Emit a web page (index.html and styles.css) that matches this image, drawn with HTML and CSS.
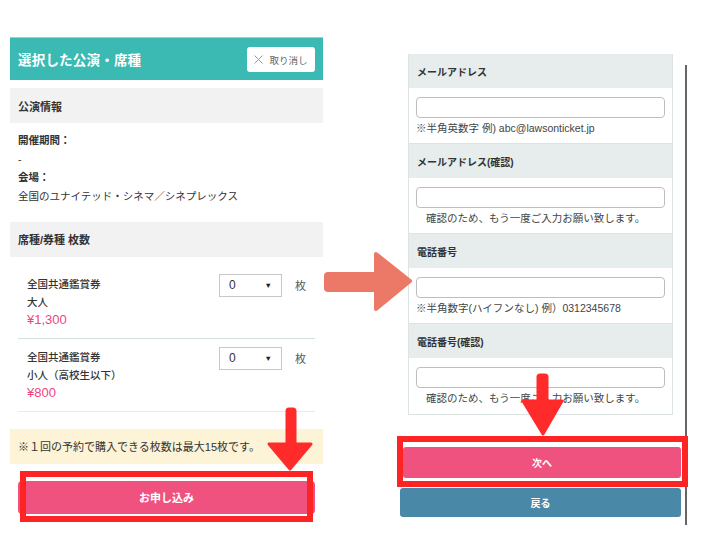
FILE: index.html
```html
<!DOCTYPE html>
<html lang="ja">
<head>
<meta charset="utf-8">
<link rel="stylesheet" href="styles.css">
</head>
<body>
<div class="page">
  <div class="left">
    <div class="sel-head">
      <span class="sel-title">選択した公演・席種</span>
      <span class="cancel"><svg class="x" width="9" height="9" viewBox="0 0 9 9"><path d="M0.5 0.5L8.5 8.5M8.5 0.5L0.5 8.5" stroke="#999" stroke-width="1" fill="none"/></svg>取り消し</span>
    </div>
    <div class="gray-bar">公演情報</div>
    <div class="info">
      <div class="b">開催期間：</div>
      <div>-</div>
      <div class="b">会場：</div>
      <div>全国のユナイテッド・シネマ／シネプレックス</div>
    </div>
    <div class="gray-bar">席種/券種 枚数</div>
    <div class="rows">
      <div class="row first">
        <div class="row-text">
          <div class="m">全国共通鑑賞券</div>
          <div class="m">大人</div>
          <div class="price">¥1,300</div>
        </div>
        <div class="select"><span>0</span><span class="tri">▼</span></div>
        <div class="mai">枚</div>
      </div>
      <div class="row">
        <div class="row-text">
          <div class="m">全国共通鑑賞券</div>
          <div class="m">小人（高校生以下）</div>
          <div class="price">¥800</div>
        </div>
        <div class="select"><span>0</span><span class="tri">▼</span></div>
        <div class="mai">枚</div>
      </div>
    </div>
    <div class="notice">※１回の予約で購入できる枚数は最大15枚です。</div>
    <div class="btn-apply">お申し込み</div>
  </div>

  <div class="right">
    <div class="form">
      <div class="f-head">メールアドレス</div>
      <div class="f-body">
        <div class="input"></div>
        <div class="note">※半角英数字 例) abc@lawsonticket.jp</div>
      </div>
      <div class="f-head">メールアドレス(確認)</div>
      <div class="f-body">
        <div class="input"></div>
        <div class="note indent">確認のため、もう一度ご入力お願い致します。</div>
      </div>
      <div class="f-head">電話番号</div>
      <div class="f-body">
        <div class="input"></div>
        <div class="note">※半角数字(ハイフンなし) 例）0312345678</div>
      </div>
      <div class="f-head">電話番号(確認)</div>
      <div class="f-body">
        <div class="input"></div>
        <div class="note indent">確認のため、もう一度ご入力お願い致します。</div>
      </div>
    </div>
    <div class="btn-next">次へ</div>
    <div class="btn-back">戻る</div>
  </div>
  <div class="scrollbar"></div>
</div>

<div class="frame frame-left"></div>
<div class="frame frame-right"></div>
<svg class="arrows" width="701" height="552" viewBox="0 0 701 552">
  <g fill="#ff2b2b" stroke="#ff2b2b" stroke-width="3" stroke-linejoin="round">
    <rect x="287" y="409" width="8" height="38" rx="2"/>
    <polygon points="269,444 311,444 290,469"/>
    <rect x="538" y="375" width="9" height="28" rx="2"/>
    <polygon points="523,401 562,401 543,434"/>
  </g>
  <g fill="#ec7868" stroke="#ec7868" stroke-width="4" stroke-linejoin="round">
    <rect x="326" y="274" width="52" height="16" rx="2"/>
    <polygon points="376,254 376,309 410,281"/>
  </g>
</svg>
</body>
</html>
```

FILE: styles.css
```css
* { box-sizing: border-box; }
html, body { margin: 0; padding: 0; background: #fff; }
body {
  width: 701px;
  height: 552px;
  overflow: hidden;
  position: relative;
  font-family: "Liberation Sans", "Noto Sans CJK JP", sans-serif;
  color: #333;
}
.page {
  display: flex;
  align-items: flex-start;
  padding-left: 10px;
}
.left {
  width: 313px;
  margin-top: 37px;
  display: flex;
  flex-direction: column;
}
.sel-head {
  height: 43px;
  background: #3bb9b3;
  display: flex;
  align-items: center;
  justify-content: space-between;
  padding: 0 8px 0 8px;
  border-top: 1px solid #8fd6d2;
}
.sel-title {
  color: #fff;
  font-weight: bold;
  font-size: 13.5px;
  letter-spacing: 0.2px;
}
.cancel {
  width: 68px;
  height: 25px;
  background: #fff;
  border-radius: 3px;
  font-size: 9.5px;
  color: #666;
  display: flex;
  align-items: center;
  justify-content: center;
  gap: 6px;
  margin-top: 1px;
}
.cancel .x { display: block; }
.gray-bar {
  margin-top: 8px;
  height: 35px;
  background: #f2f2f2;
  display: flex;
  align-items: center;
  padding-left: 8px;
  font-size: 11px;
  font-weight: bold;
}
.info {
  padding: 8px 8px 0;
  font-size: 10.5px;
  line-height: 18.7px;
  margin-bottom: 8px;
}
.info .b { font-weight: bold; }
.rows {
  margin: 9px 8px 0;
}
.row {
  display: flex;
  align-items: flex-start;
  padding: 9px 9px 9px 9px;
  border-bottom: 1px solid #cfe2df;
}
.row + .row { border-bottom-color: #e6ebeb; }
.row-text {
  flex: 1;
  font-size: 10.5px;
  line-height: 18px;
}
.row-text .m { font-weight: 500; }
.price {
  color: #f0467c;
  font-size: 13px;
}
.select {
  width: 63px;
  height: 23px;
  margin-top: -1px;
  border: 1px solid #c8c8c8;
  display: flex;
  align-items: center;
  justify-content: space-between;
  padding: 0 9px 0 9px;
  font-size: 12px;
  color: #333;
}
.select .tri { font-size: 7.5px; color: #222; }
.mai {
  margin-left: 13px;
  font-size: 11px;
  line-height: 22px;
  color: #555;
}
.notice {
  margin-top: 17px;
  height: 35px;
  background: #fdf3d6;
  display: flex;
  align-items: center;
  padding-left: 8px;
  font-size: 11px;
}
.btn-apply {
  margin: 17px 8px 0;
  height: 33px;
  background: #f0527f;
  border-radius: 4px;
  color: #fff;
  font-weight: bold;
  font-size: 11px;
  display: flex;
  align-items: center;
  justify-content: center;
}
.right {
  width: 281px;
  margin-left: 77px;
  display: flex;
  flex-direction: column;
}
.form {
  margin: 54px 0 0 8px;
  width: 265px;
  border: 1px solid #dde4e4;
  border-top: none;
}
.f-head {
  height: 34px;
  background: #e7eded;
  display: flex;
  align-items: center;
  padding-left: 8px;
  font-size: 10px;
  font-weight: bold;
}
.f-body {
  height: 56px;
  padding: 9px 7px 0 7px;
  border-bottom: 1px solid #dde4e4;
  overflow: hidden;
}
.f-body:last-child { border-bottom: none; }
.input {
  height: 21px;
  border: 1px solid #bdbdbd;
  border-radius: 4px;
  background: #fff;
}
.note {
  font-size: 10.5px;
  height: 20px;
  line-height: 20px;
  color: #444;
}
.note.indent { padding-left: 10px; }
.btn-next {
  margin: 32px 0 0 3px;
  height: 31px;
  background: #f0527f;
  border-radius: 3px;
  color: #fff;
  font-weight: bold;
  font-size: 10px;
  display: flex;
  align-items: center;
  justify-content: center;
}
.btn-back {
  margin-top: 10px;
  height: 29px;
  background: #4a88a8;
  border-radius: 3px;
  color: #fff;
  font-weight: bold;
  font-size: 10px;
  display: flex;
  align-items: center;
  justify-content: center;
}
.scrollbar {
  width: 2px;
  height: 460px;
  margin: 65px 0 0 4px;
  background: #666;
}
.frame {
  position: absolute;
  border: 6px solid #ff2424;
  box-shadow: inset 0 2px 0 #fff, inset 0 -2px 0 #fff;
}
.frame-left { left: 20px; top: 471px; width: 293px; height: 51px; }
.frame-right { left: 397px; top: 436px; width: 291px; height: 51px; box-shadow: inset 0 2px 0 #fff, inset 0 -3px 0 #fff; }
.arrows {
  position: absolute;
  left: 0;
  top: 0;
  pointer-events: none;
}
```
